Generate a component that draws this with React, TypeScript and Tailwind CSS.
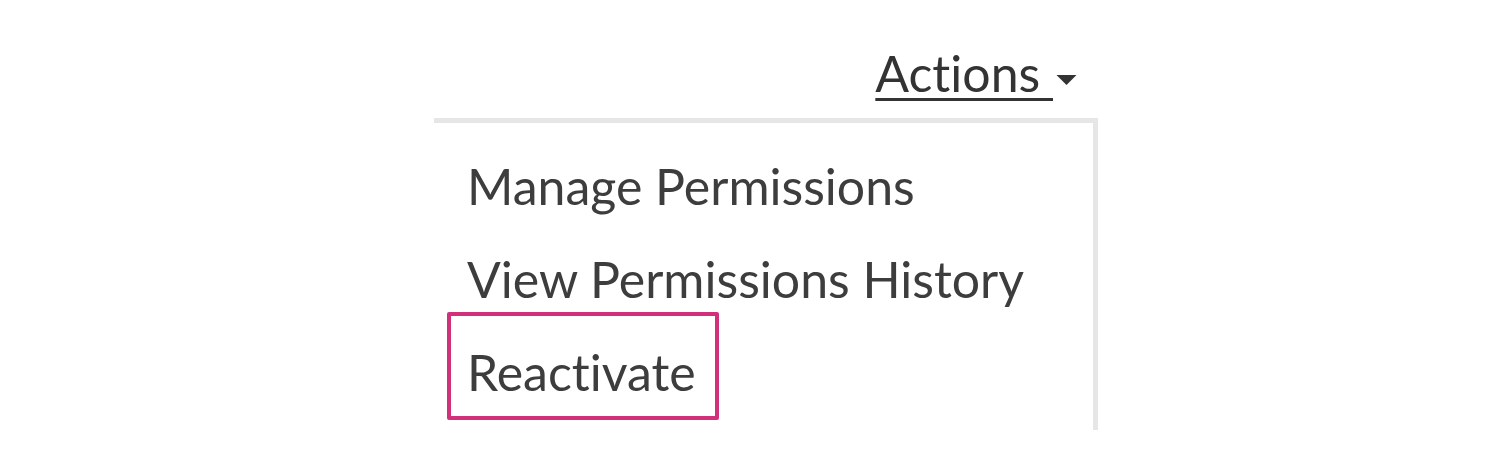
export default function App() {
  const items = ['Manage Permissions', 'View Permissions History', 'Reactivate']

  return (
    <div className="w-[1512px] h-[450px] bg-white overflow-hidden font-['Lato','Liberation_Sans',sans-serif] [font-variant-ligatures:none] text-[#3d3d3d]">
      <div className="ml-[434px] w-[664px] pt-[48px]">
        <div className="flex justify-end pr-[21px] h-[70px]">
          <button className="flex items-start text-[50px] leading-none text-[#333]">
            <span className="underline decoration-[3px] underline-offset-[6px]">Actions&nbsp;</span>
            <svg viewBox="0 0 20 10" className="w-[21px] h-[10px] ml-[3px] mt-[27px]">
              <path d="M0 0 L20 0 L10 10 Z" fill="#333" />
            </svg>
          </button>
        </div>
        <div className="h-[312px] border-t-[5px] border-r-[5px] border-[#e6e6e6] pt-[38px]">
          {items.map((label) => (
            <div key={label} className="h-[93px] flex items-start">
              <span
                className={
                  label === 'Reactivate'
                    ? 'ml-[13px] -mt-[35px] pl-[16px] pr-[19px] pt-[31px] pb-[19px] border-[4px] border-[#d0317a] rounded-[2px] text-[50px] leading-none'
                    : 'ml-[33px] text-[50px] leading-none'
                }
              >
                {label}
              </span>
            </div>
          ))}
        </div>
      </div>
    </div>
  )
}
